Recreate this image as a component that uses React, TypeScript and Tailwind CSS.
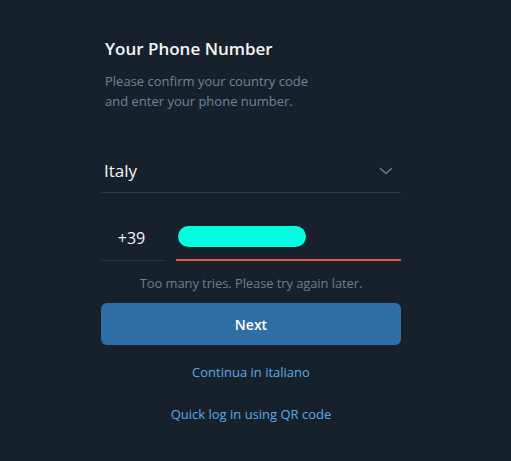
export default function App() {
  return (
    <div
      className="w-[511px] h-[461px] bg-[#17212b] overflow-hidden"
      style={{ fontFamily: '"Open Sans", "Noto Sans", sans-serif' }}
    >
      <div className="ml-[101px] w-[300px] flex flex-col">
        <h1 className="mt-[37px] ml-[4px] text-[17px] leading-[24px] font-semibold text-[#f5f5f5]">
          Your Phone Number
        </h1>
        <p className="mt-[10px] ml-[4px] text-[13px] leading-[20px] text-[#708499]">
          Please confirm your country code
          <br />
          and enter your phone number.
        </p>

        <div className="mt-[38px] h-[44px] flex items-center justify-between border-b border-[#2b3845] pl-[3px] pr-[8px]">
          <span className="text-[17px] text-[#f5f5f5]">Italy</span>
          <svg width="14" height="8" viewBox="0 0 14 8" fill="none">
            <path d="M1 1l6 5.5L13 1" stroke="#6d7883" strokeWidth="1.6" />
          </svg>
        </div>

        <div className="mt-[22px] flex items-end gap-[11px]">
          <div className="w-[64px] h-[45px] flex items-center justify-center border-b border-[#2b3845]">
            <span className="text-[16px] text-[#f5f5f5] -ml-[3px]">+39</span>
          </div>
          <div className="flex-1 h-[46px] flex items-center border-b-2 border-[#e55456] pl-[2px] pb-[1px]">
            <div className="w-[128px] h-[21px] rounded-full bg-[#00ffe1]" />
          </div>
        </div>

        <p className="mt-[13px] text-center text-[13px] tracking-[-0.1px] leading-[18px] text-[#6c7d8d]">
          Too many tries. Please try again later.
        </p>

        <button className="mt-[11px] h-[42px] rounded-[6px] bg-[#2f6ea5] text-white text-[14px] font-semibold">
          Next
        </button>

        <a className="mt-[18px] text-center text-[13px] leading-[18px] text-[#5ca9ea]">
          Continua in italiano
        </a>
        <a className="mt-[24px] text-center text-[13px] leading-[18px] text-[#5ca9ea]">
          Quick log in using QR code
        </a>
      </div>
    </div>
  );
}
